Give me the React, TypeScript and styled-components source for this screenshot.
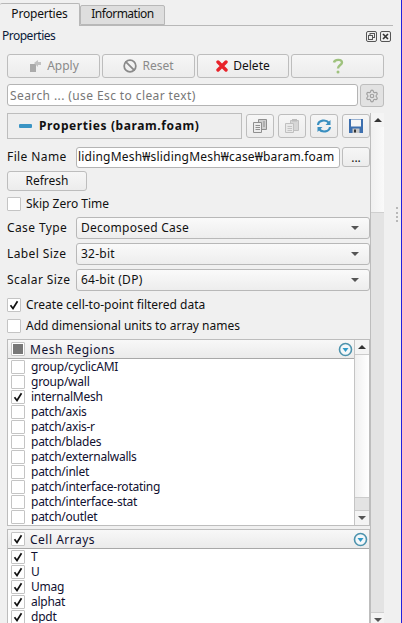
import styled, { createGlobalStyle } from "styled-components";
import { Ban, Settings } from "lucide-react";

const Global = createGlobalStyle`
  html, body { margin: 0; padding: 0; background: #f0f0f0; }
  body { font-family: "Noto Sans", "Noto Sans CJK KR", sans-serif; font-size: 12px; line-height: 15px; color: #111; }
`;

const Window = styled.div`
  position: relative;
  width: 402px;
  height: 623px;
  overflow: hidden;
  display: flex;
  box-sizing: border-box;
  border-right: 1px solid #2222dd;
`;

const Grip = styled.div`
  position: absolute;
  left: 396px;
  top: 207px;
  height: 15px;
  border-left: 2px dotted #b8b8b8;
`;

const Panel = styled.div`
  width: 401px;
  flex-shrink: 0;
  padding-top: 2px;
  box-sizing: border-box;
`;

const TabBar = styled.div`
  display: flex;
  align-items: flex-end;
  height: 23px;
  width: 393px;
  border-bottom: 1px solid #b8b8b8;
  box-sizing: content-box;
`;

const Tab = styled.div<{ $active?: boolean }>`
  box-sizing: border-box;
  height: ${(p) => (p.$active ? 23 : 20)}px;
  width: ${(p) => (p.$active ? 80 : 85)}px;
  margin-bottom: ${(p) => (p.$active ? -1 : 0)}px;
  background: ${(p) => (p.$active ? "#f0f0f0" : "#dedede")};
  border: 1px solid #b8b8b8;
  border-bottom: ${(p) => (p.$active ? "none" : "1px solid #b8b8b8")};
  border-left: ${(p) => (p.$active ? "none" : "1px solid #b8b8b8")};
  border-radius: 2px 2px 0 0;
  display: flex;
  align-items: center;
  justify-content: center;
  padding-bottom: 3px;
  letter-spacing: ${(p) => (p.$active ? -0.2 : -0.5)}px;
`;

const TitleRow = styled.div`
  height: 20px;
  padding: 0 10px 0 2px;
  display: flex;
  align-items: center;
  justify-content: space-between;
  color: #0a1a3a;
  letter-spacing: -0.5px;
`;

const Caption = styled.span`
  margin-bottom: 2px;
  white-space: nowrap;
`;

const DockIcons = styled.div`
  display: flex;
  gap: 3px;
`;

const Content = styled.div`
  width: 377px;
  margin-left: 7px;
`;

const ButtonRow = styled.div`
  display: grid;
  grid-template-columns: 93px 93px 92px 93px;
  gap: 2px;
  height: 24px;
  margin-top: 8px;
  width: 377px;
`;

const PushButton = styled.div<{ $disabled?: boolean }>`
  box-sizing: border-box;
  border: 1px solid #bdbdbd;
  border-radius: 3px;
  background: linear-gradient(#f6f6f6, #ececec);
  display: flex;
  align-items: center;
  justify-content: center;
  gap: 5px;
  color: ${(p) => (p.$disabled ? "#8a8a8a" : "#111")};
`;

const SearchRow = styled.div`
  display: flex;
  gap: 2px;
  margin-top: 6px;
  height: 22px;
`;

const SearchInput = styled.div`
  box-sizing: border-box;
  width: 351px;
  height: 22px;
  background: #fff;
  border: 1px solid #b4b4b4;
  border-radius: 3px;
  padding-left: 2px;
  display: flex;
  align-items: center;
  color: #777;
  white-space: nowrap;
  letter-spacing: 0.4px;
`;

const GearButton = styled(PushButton)`
  width: 24px;
  height: 23px;
  background: #e2e2e2;
  color: #a0a0a0;
`;

const ScrollArea = styled.div`
  display: flex;
  margin-top: 7px;
`;

const Form = styled.div`
  width: 363px;
  flex-shrink: 0;
  height: 510px;
  overflow: hidden;
`;

const SectionRow = styled.div`
  display: flex;
  height: 26px;
  align-items: center;
`;

const SectionHeader = styled.div`
  box-sizing: border-box;
  width: 235px;
  height: 26px;
  border: 1px solid #bdbdbd;
  background: #eeeeee;
  display: flex;
  align-items: center;
  padding-left: 11px;
  gap: 7px;
  font-weight: 700;
  white-space: nowrap;
  letter-spacing: 0.6px;
`;

const Dash = styled.span`
  width: 13px;
  height: 4px;
  background: #3a94c4;
  border-radius: 1px;
`;

const SectionTools = styled.div`
  display: flex;
  gap: 4px;
  margin-left: 4px;
`;

const ToolButton = styled(PushButton)`
  width: 28px;
  height: 24px;
`;

const FieldRow = styled.div<{ $top: number }>`
  display: flex;
  align-items: center;
  height: 22px;
  margin-top: ${(p) => p.$top}px;
`;

const FieldLabel = styled.div`
  width: 69px;
  flex-shrink: 0;
  margin-bottom: 2px;
  white-space: nowrap;
  letter-spacing: 0.4px;
`;

const TextInput = styled.div`
  box-sizing: border-box;
  width: 264px;
  height: 21px;
  background: #fff;
  border: 1px solid #b4b4b4;
  border-radius: 3px;
  display: flex;
  align-items: center;
  padding-left: 1px;
  overflow: hidden;
  white-space: nowrap;
  letter-spacing: 0.2px;
`;

const SmallButton = styled(PushButton)`
  width: 28px;
  height: 20px;
  margin-left: 2px;
`;

const RefreshButton = styled(PushButton)`
  width: 80px;
  height: 20px;
  margin-top: 3px;
`;

const CheckRow = styled.label<{ $top: number }>`
  display: flex;
  align-items: flex-start;
  gap: 5px;
  height: 14px;
  line-height: 13px;
  margin-top: ${(p) => p.$top}px;
  white-space: nowrap;
`;

const Box = styled.span`
  box-sizing: border-box;
  width: 14px;
  height: 14px;
  flex-shrink: 0;
  border: 1px solid #c4c4c4;
  border-radius: 1px;
  background: #fff;
  display: flex;
  align-items: center;
  justify-content: center;
`;

const Combo = styled.div`
  box-sizing: border-box;
  width: 294px;
  height: 22px;
  border: 1px solid #b8b8b8;
  border-radius: 3px;
  background: linear-gradient(#fafafa, #ededed);
  padding: 0 10px 0 4px;
  display: flex;
  align-items: center;
  justify-content: space-between;
  letter-spacing: 0.25px;
`;

const DownArrow = styled.span`
  width: 0;
  height: 0;
  border-left: 4px solid transparent;
  border-right: 4px solid transparent;
  border-top: 4px solid #555;
`;

const UpArrow = styled.span`
  width: 0;
  height: 0;
  border-left: 4px solid transparent;
  border-right: 4px solid transparent;
  border-bottom: 4px solid #333;
`;

const Table = styled.div<{ $top: number }>`
  box-sizing: border-box;
  display: flex;
  border: 1px solid #bdbdbd;
  margin-top: ${(p) => p.$top}px;
  background: #fff;
`;

const TableColumn = styled.div`
  flex: 1;
  min-width: 0;
`;

const TableHeader = styled.div`
  box-sizing: border-box;
  height: 19px;
  background: linear-gradient(#f8f8f8, #ebebeb);
  border-bottom: 1px solid #a8a8a8;
  display: flex;
  align-items: center;
  padding: 0 1px 0 3px;
  gap: 5px;
  color: #101030;
`;

const HeaderText = styled.span`
  flex: 1;
  letter-spacing: 0.5px;
`;

const Rows = styled.div`
  padding: 1px 0 0 3px;
`;

const Row = styled.div`
  display: flex;
  align-items: flex-start;
  gap: 6px;
  height: 15px;
  line-height: 13px;
  color: #101030;
  white-space: nowrap;
  letter-spacing: -0.25px;
`;

const MiniScroll = styled.div`
  width: 14px;
  flex-shrink: 0;
  border-left: 1px solid #c4c4c4;
  background: #fff;
  display: flex;
  flex-direction: column;
`;

const ScrollEnd = styled.div`
  height: 14px;
  flex-shrink: 0;
  background: #f4f4f4;
  display: flex;
  align-items: center;
  justify-content: center;
`;

const MiniHandle = styled.div`
  flex: 1;
  background: linear-gradient(90deg, #f0f0f0, #ffffff);
  border-top: 1px solid #ccc;
`;

const MiniTrack = styled.div`
  height: 12px;
  background: #e3e3e3;
  border-top: 1px solid #ccc;
  border-bottom: 1px solid #ccc;
`;

const Scrollbar = styled.div`
  width: 14px;
  height: 514px;
  flex-shrink: 0;
  display: flex;
  flex-direction: column;
  border-left: 1px solid #bdbdbd;
  box-sizing: border-box;
`;

const Handle = styled.div`
  height: 86px;
  background: linear-gradient(90deg, #f0f0f0, #fafafa);
  border-bottom: 1px solid #cfcfcf;
  box-sizing: border-box;
`;

const Track = styled.div`
  flex: 1;
  background: #e3e3e3;
  border-bottom: 1px solid #cfcfcf;
`;

const CheckIcon = () => (
  <svg width="10" height="10" viewBox="0 0 10 10">
    <path d="M1.5 5.2 L4 8.5 L8.5 1.2" fill="none" stroke="#111" strokeWidth="1.7" />
  </svg>
);

const Check = ({ on }: { on?: boolean }) => <Box>{on && <CheckIcon />}</Box>;

const TriCircle = () => (
  <svg width="15" height="15" viewBox="0 0 15 15">
    <circle cx="7.5" cy="7.5" r="6" fill="#f4f8fa" stroke="#4d93ad" strokeWidth="1.6" />
    <path d="M4.5 6 H10.5 L7.5 10 Z" fill="#2f9ac8" />
  </svg>
);

const meshRows = [
  ["group/cyclicAMI", false],
  ["group/wall", false],
  ["internalMesh", true],
  ["patch/axis", false],
  ["patch/axis-r", false],
  ["patch/blades", false],
  ["patch/externalwalls", false],
  ["patch/inlet", false],
  ["patch/interface-rotating", false],
  ["patch/interface-stat", false],
  ["patch/outlet", false],
] as const;

const cellRows = ["T", "U", "Umag", "alphat", "dpdt"];

const CopyIcon = () => (
  <svg width="16" height="16" viewBox="0 0 16 16">
    <path d="M6.5 1.5 H14.5 V11.5 H6.5 Z" fill="#cfcfcf" stroke="#8f8f8f" />
    <path d="M1.5 4.5 H9.5 V14.5 H1.5 Z" fill="#ececec" stroke="#8f8f8f" />
    <path d="M3.5 7.5 H8 M3.5 9.5 H8 M3.5 11.5 H8 M11 4 H13 M11 6 H13 M11 8 H13" stroke="#8f8f8f" />
  </svg>
);

const PasteIcon = () => (
  <svg width="16" height="16" viewBox="0 0 16 16">
    <path d="M6.5 2.5 H14.5 V12.5 H6.5 Z" fill="#d6d6d6" stroke="#c0c0c0" />
    <rect x="8" y="1" width="5" height="2.5" fill="#bcbcbc" />
    <path d="M1.5 5.5 H9.5 V14.5 H1.5 Z" fill="#e8e8e8" stroke="#c0c0c0" />
    <path d="M3.5 8.5 H8 M3.5 10.5 H8 M3.5 12.5 H8" stroke="#c4c4c4" />
  </svg>
);

export default function App() {
  return (
    <Window>
      <Global />
      <Grip />
      <Panel>
        <TabBar>
          <Tab $active>Properties</Tab>
          <Tab>Information</Tab>
        </TabBar>
        <TitleRow>
          <Caption>Properties</Caption>
          <DockIcons>
            <svg width="11" height="11" viewBox="0 0 11 11">
              <rect x="0.5" y="0.5" width="10" height="10" rx="1.5" fill="#eee" stroke="#555" />
              <rect x="4" y="2.5" width="4.5" height="4" fill="none" stroke="#555" />
              <rect x="2.5" y="4.5" width="4" height="4" fill="#eee" stroke="#555" />
            </svg>
            <svg width="11" height="11" viewBox="0 0 11 11">
              <rect x="0.5" y="0.5" width="10" height="10" rx="1.5" fill="#eee" stroke="#555" />
              <path d="M3 3 L8 8 M8 3 L3 8" stroke="#333" strokeWidth="1.6" />
            </svg>
          </DockIcons>
        </TitleRow>
        <Content>
          <ButtonRow>
            <PushButton $disabled>
              <svg width="14" height="14" viewBox="0 0 14 14">
                <path d="M2 5 L8 5 L8 13 L2 13 Z" fill="#aaa" />
                <path d="M6 4 L10 1 L10 3 L13 3 L13 6 L10 6 L10 8 Z" fill="#c2c2c2" />
              </svg>
              <Caption>Apply</Caption>
            </PushButton>
            <PushButton $disabled>
              <Ban size={14} color="#8a8a8a" strokeWidth={3} />
              <Caption>Reset</Caption>
            </PushButton>
            <PushButton>
              <svg width="12" height="12" viewBox="0 0 12 12">
                <path d="M2 2 L10 10 M10 2 L2 10" stroke="#e8232a" strokeWidth="3.4" strokeLinecap="round" />
              </svg>
              <Caption>Delete</Caption>
            </PushButton>
            <PushButton>
              <svg width="12" height="16" viewBox="0 0 12 16">
                <path d="M2 4.5 C2.5 1 10 1 10 4.5 C10 7 6 7 6 10.5" fill="none" stroke="#9fc27e" strokeWidth="2.4" />
                <circle cx="6" cy="14" r="1.5" fill="#9fc27e" />
              </svg>
            </PushButton>
          </ButtonRow>
          <SearchRow>
            <SearchInput>Search ... (use Esc to clear text)</SearchInput>
            <GearButton>
              <Settings size={14} color="#a0a0a0" />
            </GearButton>
          </SearchRow>
          <ScrollArea>
            <Form>
              <SectionRow>
                <SectionHeader>
                  <Dash />
                  <Caption>Properties (baram.foam)</Caption>
                </SectionHeader>
                <SectionTools>
                  <ToolButton><CopyIcon /></ToolButton>
                  <ToolButton><PasteIcon /></ToolButton>
                  <ToolButton>
                    <svg width="16" height="16" viewBox="0 0 16 16">
                      <path d="M2 7 C2.5 2 10 1 13 5" fill="none" stroke="#3a8fc0" strokeWidth="2.2" />
                      <path d="M14.5 2 V7 H9.5 Z" fill="#3a8fc0" />
                      <path d="M14 9 C13.5 14 6 15 3 11" fill="none" stroke="#3a8fc0" strokeWidth="2.2" />
                      <path d="M1.5 14 V9 H6.5 Z" fill="#3a8fc0" />
                    </svg>
                  </ToolButton>
                  <ToolButton>
                    <svg width="16" height="16" viewBox="0 0 16 16">
                      <rect x="1" y="1" width="14" height="14" fill="#3d6fae" />
                      <rect x="3" y="1.5" width="10" height="7" fill="#f6f6f6" />
                      <rect x="4.5" y="10.5" width="7" height="4.5" fill="#c8c8c8" />
                      <rect x="6" y="11.5" width="2" height="3" fill="#333" />
                    </svg>
                  </ToolButton>
                </SectionTools>
              </SectionRow>
              <FieldRow $top={7}>
                <FieldLabel>File Name</FieldLabel>
                <TextInput><Caption>lidingMesh₩slidingMesh₩case₩baram.foam</Caption></TextInput>
                <SmallButton>...</SmallButton>
              </FieldRow>
              <RefreshButton><Caption>Refresh</Caption></RefreshButton>
              <CheckRow $top={6}><Check />Skip Zero Time</CheckRow>
              <FieldRow $top={6}>
                <FieldLabel>Case Type</FieldLabel>
                <Combo><Caption>Decomposed Case</Caption><DownArrow /></Combo>
              </FieldRow>
              <FieldRow $top={4}>
                <FieldLabel>Label Size</FieldLabel>
                <Combo><Caption>32-bit</Caption><DownArrow /></Combo>
              </FieldRow>
              <FieldRow $top={4}>
                <FieldLabel>Scalar Size</FieldLabel>
                <Combo><Caption>64-bit (DP)</Caption><DownArrow /></Combo>
              </FieldRow>
              <CheckRow $top={7}><Check on />Create cell-to-point filtered data</CheckRow>
              <CheckRow $top={7}><Check />Add dimensional units to array names</CheckRow>
              <Table $top={6}>
                <TableColumn>
                  <TableHeader>
                    <Box><svg width="10" height="10"><rect width="10" height="10" fill="#777" /></svg></Box>
                    <HeaderText>Mesh Regions</HeaderText>
                    <TriCircle />
                  </TableHeader>
                  <Rows>
                    {meshRows.map(([name, on]) => (
                      <Row key={name}><Check on={on} />{name}</Row>
                    ))}
                  </Rows>
                </TableColumn>
                <MiniScroll>
                  <ScrollEnd><UpArrow /></ScrollEnd>
                  <MiniHandle />
                  <MiniTrack />
                  <ScrollEnd><DownArrow /></ScrollEnd>
                </MiniScroll>
              </Table>
              <Table $top={3}>
                <TableColumn>
                  <TableHeader>
                    <Box><CheckIcon /></Box>
                    <HeaderText>Cell Arrays</HeaderText>
                    <TriCircle />
                  </TableHeader>
                  <Rows>
                    {cellRows.map((name) => (
                      <Row key={name}><Check on />{name}</Row>
                    ))}
                  </Rows>
                </TableColumn>
              </Table>
            </Form>
            <Scrollbar>
              <ScrollEnd><UpArrow /></ScrollEnd>
              <Handle />
              <Track />
              <ScrollEnd><DownArrow /></ScrollEnd>
            </Scrollbar>
          </ScrollArea>
        </Content>
      </Panel>
    </Window>
  );
}
